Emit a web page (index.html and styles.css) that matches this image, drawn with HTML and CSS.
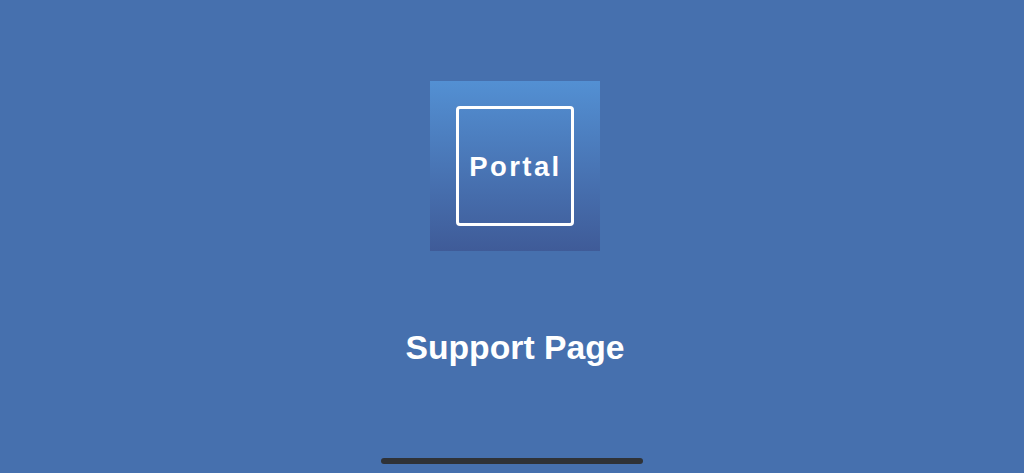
FILE: index.html
```html
<!DOCTYPE html>
<html lang="en">
<head>
    <meta charset="UTF-8">
    <meta name="viewport" content="width=device-width, initial-scale=1.0">
    <title>Support Page</title>
    <link rel="stylesheet" href="styles.css">
</head>
<body>
    <main class="content">
        <div class="logo">
            <div class="logo-box">
                <span class="logo-text">Portal</span>
            </div>
        </div>
        <h1 class="title">Support Page</h1>
    </main>
    <div class="home-bar"></div>
</body>
</html>
```

FILE: styles.css
```css
* {
    margin: 0;
    padding: 0;
    box-sizing: border-box;
}

html, body {
    height: 100%;
}

body {
    font-family: "Liberation Sans", Arial, sans-serif;
    background: #4670ae;
    color: #fff;
    display: flex;
    flex-direction: column;
    overflow: hidden;
}

.content {
    flex: 1;
    display: flex;
    flex-direction: column;
    align-items: center;
    padding: 81px 0 0 6px;
}

.logo {
    width: 170px;
    height: 170px;
    background: linear-gradient(180deg, #5390d3 0%, #3f5b98 100%);
    display: flex;
    justify-content: center;
    align-items: center;
}

.logo-box {
    width: 118px;
    height: 120px;
    border: 3px solid #fff;
    border-radius: 4px;
    display: flex;
    justify-content: center;
    align-items: center;
}

.logo-text {
    padding: 2px 0 0 1px;
    font-size: 27.5px;
    font-weight: bold;
    letter-spacing: 2.4px;
}

.title {
    margin-top: 76px;
    font-size: 33.7px;
    line-height: 40px;
    font-weight: bold;
}

.home-bar {
    width: 262px;
    height: 6px;
    margin: 0 auto 9px;
    background: #2f3237;
    border-radius: 3px;
}
```
